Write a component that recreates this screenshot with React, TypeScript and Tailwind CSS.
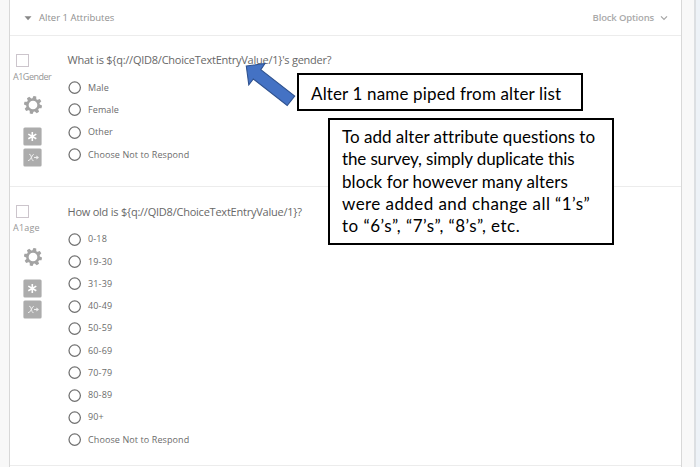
import React from "react";

const sans = "font-['Open_Sans','Noto_Sans',sans-serif]";
const note = "font-['Lato','Open_Sans',sans-serif]";

const gearTeeth = [0, 45, 90, 135, 180, 225, 270, 315];

function Gear() {
  return (
    <svg width="18" height="18" viewBox="-9 -9 18 18" className="block">
      <circle r="5.6" fill="none" stroke="#a3a3a3" strokeWidth="2.5" />
      {gearTeeth.map((a) => (
        <path key={a} d="M-2.1 -6L-1.4 -9H1.4L2.1 -6Z" fill="#a3a3a3" transform={`rotate(${a + 12})`} />
      ))}
    </svg>
  );
}

function Required() {
  return (
    <svg width="19" height="19" viewBox="0 0 19 19" className="block">
      <rect x="0.4" y="0.5" width="18.2" height="18" rx="1.5" fill="#acacac" />
      <path d="M9.3 4.9V13.9M5.3 7.1L13.3 11.7M13.3 7.1L5.3 11.7" stroke="#fff" strokeWidth="1.6" />
    </svg>
  );
}

function Logic() {
  return (
    <svg width="19" height="19" viewBox="0 0 19 19" className="block">
      <rect x="0.4" y="0.5" width="18.2" height="18" rx="1.5" fill="#acacac" />
      <path d="M6.2 6.3Q7.4 6 8 8L9 11.4Q9.5 13 10.5 12.6M10.8 6.3Q9.8 6.1 8.6 9Q7 12.8 5 12.7" fill="none" stroke="#eee" strokeWidth="1" />
      <path d="M11 9.5H15" stroke="#eee" strokeWidth="1.1" />
      <path d="M13.4 7.5L16 9.5L13.4 11.5Z" fill="#eee" />
    </svg>
  );
}

function Question(props: { id: string; idClass: string; gearClass: string; title: string; titleClass: string; options: { label: string; track: string }[] }) {
  return (
    <div className="flex">
      <div className="flex w-[57px] shrink-0 flex-col pl-[3px]">
        <div className="ml-[3px] mt-[18px] h-[13px] w-[13px] border border-[#ccc5cc]" />
        <div className={`mt-[3px] h-[14px] whitespace-nowrap text-[9px] leading-[14px] text-[#969696] ${props.idClass}`}>{props.id}</div>
        <div className={`ml-[11px] ${props.gearClass}`}><Gear /></div>
        <div className="ml-[10px] mt-[13px]"><Required /></div>
        <div className="ml-[10px] mt-[2px]"><Logic /></div>
      </div>
      <div>
        <div className={`ml-[0.5px] h-[16px] whitespace-nowrap text-[11px] leading-[16px] text-[#686868] ${props.titleClass}`}>{props.title}</div>
        <div>
          {props.options.map((o) => (
            <div key={o.label} className="flex h-[22.27px] items-center">
              <svg width="15" height="15" viewBox="0 0 15 15" className="block shrink-0">
                <circle cx="7.7" cy="7.6" r="5.7" fill="#fff" stroke="#707070" strokeWidth="1.25" />
              </svg>
              <span className={`ml-[6px] whitespace-nowrap text-[9px] leading-[14px] text-[#6c6c6c] ${o.track}`}>{o.label}</span>
            </div>
          ))}
        </div>
      </div>
    </div>
  );
}

const range = "tracking-[0.15px]";
const refuse = { label: "Choose Not to Respond", track: "tracking-[0.1px]" };
const genders = [
  { label: "Male", track: "tracking-[0.1px]" },
  { label: "Female", track: "tracking-[0.1px]" },
  { label: "Other", track: "tracking-[0.05px]" },
  refuse,
];
const ages = [
  ...["0-18", "19-30", "31-39", "40-49", "50-59", "60-69", "70-79", "80-89", "90+"].map((label) => ({ label, track: range })),
  refuse,
];

export default function App() {
  return (
    <div className={`relative flex h-[467px] w-[700px] overflow-hidden bg-[#f8f8f8] ${sans}`}>
      <div className="ml-[9px] w-[673px] shrink-0 border-x border-[#d8d8d8] bg-white">
        <div className="flex h-[36px] items-center border-b border-[#ececec] pl-[14px] pr-[13px] pt-px text-[9.5px] text-[#8f8f8f]">
          <svg width="8" height="5" viewBox="0 0 8 5"><path d="M0.5 0.3H7.5L4 4.3Z" fill="#888" /></svg>
          <span className="ml-[7px] whitespace-nowrap tracking-[0px]">Alter 1 Attributes</span>
          <span className="ml-auto whitespace-nowrap font-semibold tracking-[-0.17px] text-[#aaa]">Block Options</span>
          <svg width="8" height="6" viewBox="0 0 8 6" className="ml-[6px]"><path d="M1 1.3L4 4.3L7 1.3" fill="none" stroke="#a5a5a5" strokeWidth="1.2" /></svg>
        </div>
        <div className="h-[151px] border-b border-[#ececec]">
          <Question id="A1Gender" idClass="tracking-[-0.5px]" gearClass="mt-[12px]" title="What is ${q://QID8/ChoiceTextEntryValue/1}'s gender?" titleClass="mt-[16px] mb-[8.6px] tracking-[-0.24px]" options={genders} />
        </div>
        <div className="h-[279px] border-b border-[#ececec]">
          <Question id="A1age" idClass="tracking-[0.2px]" gearClass="mt-[13px]" title="How old is ${q://QID8/ChoiceTextEntryValue/1}?" titleClass="mt-[17px] mb-[8.2px] tracking-[-0.23px]" options={ages} />
        </div>
      </div>
      <div className="ml-auto w-[6px] border-l-2 border-[#dcdfe2] bg-[#edf2f7]" />

      <svg className="absolute left-[240px] top-[58px]" width="60" height="54" viewBox="240 58 60 54">
        <path d="M246.3 66L265 63.5L260.8 69.7L294.7 96L287.2 105.5L253.3 79L248.8 84.8Z" fill="#4472c4" stroke="#2f528f" strokeWidth="1.1" />
      </svg>
      <div className={`absolute left-[297px] top-[73px] flex h-[38px] w-[286px] items-center border-2 border-black bg-white pl-[12px] pt-[3px] text-[17px] text-black ${note}`}>
        <span className="whitespace-nowrap tracking-[0.15px]">Alter 1 name piped from alter list</span>
      </div>
      <div className={`absolute left-[328px] top-[118px] h-[127px] w-[286px] border-2 border-black bg-white pl-[12px] pt-[6px] text-[17px] leading-[22.3px] text-black ${note}`}>
        <div className="whitespace-nowrap tracking-[0.01px]">To add alter attribute questions to</div>
        <div className="whitespace-nowrap tracking-[-0.13px]">the survey, simply duplicate this</div>
        <div className="whitespace-nowrap tracking-[0.07px]">block for however many alters</div>
        <div className="whitespace-nowrap tracking-[0.43px]">were added and change all “1’s”</div>
        <div className="whitespace-nowrap tracking-[0.48px]">to “6’s”, “7’s”, “8’s”, etc.</div>
      </div>
    </div>
  );
}
